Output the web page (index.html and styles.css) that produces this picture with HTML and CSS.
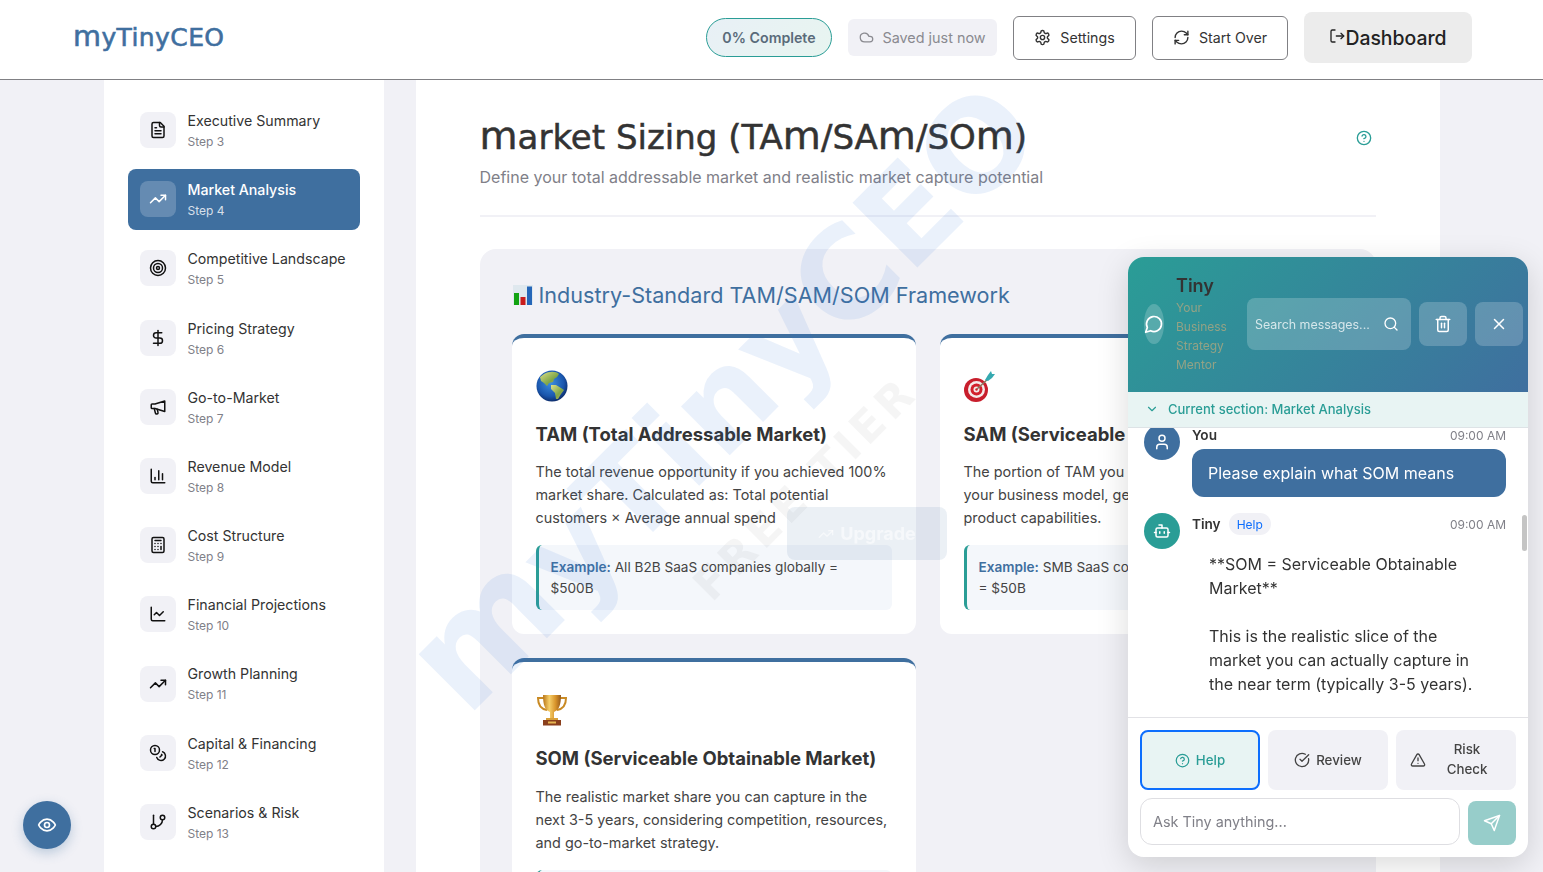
FILE: index.html
```html
<!DOCTYPE html>
<html lang="en">
<head>
  <meta charset="UTF-8">
  <title>MyTinyCEO - Market Sizing</title>
  <link rel="stylesheet" href="styles.css">
</head>
<body>
  <!-- icon sprite -->
  <svg class="sprite" xmlns="http://www.w3.org/2000/svg">
    <defs>
      <radialGradient id="g-sea" cx="0.45" cy="0.4" r="0.62"><stop offset="0" stop-color="#3d8fe0"/><stop offset="0.7" stop-color="#1a56ad"/><stop offset="1" stop-color="#0c2a66"/></radialGradient>
      <linearGradient id="g-land" x1="0" y1="0" x2="1" y2="1"><stop offset="0" stop-color="#dfe08a"/><stop offset="0.6" stop-color="#7fa648"/><stop offset="1" stop-color="#c3a94e"/></linearGradient>
      <linearGradient id="g-gold" x1="0" y1="0" x2="1" y2="0"><stop offset="0" stop-color="#b9761a"/><stop offset="0.35" stop-color="#f6cf6a"/><stop offset="0.7" stop-color="#d8932a"/><stop offset="1" stop-color="#96591a"/></linearGradient>
    </defs>
    <symbol id="i-file" viewBox="0 0 24 24"><path d="M15 2H6a2 2 0 0 0-2 2v16a2 2 0 0 0 2 2h12a2 2 0 0 0 2-2V7Z"/><path d="M14 2v4a2 2 0 0 0 2 2h4"/><path d="M10 9H8"/><path d="M16 13H8"/><path d="M16 17H8"/></symbol>
    <symbol id="i-trend" viewBox="0 0 24 24"><path d="M22 7l-8.500 8.500-5-5L2 17"/><path d="M16 7h6v6"/></symbol>
    <symbol id="i-target" viewBox="0 0 24 24"><circle cx="12" cy="12" r="10"/><circle cx="12" cy="12" r="6"/><circle cx="12" cy="12" r="2"/></symbol>
    <symbol id="i-dollar" viewBox="0 0 24 24"><path d="M12 2v20"/><path d="M17 5H9.500a3.500 3.500 0 0 0 0 7h5a3.500 3.500 0 0 1 0 7H6"/></symbol>
    <symbol id="i-mega" viewBox="0 0 24 24"><path d="M21 4v14l-13-4H4a1 1 0 0 1-1-1V9a1 1 0 0 1 1-1h4z"/><path d="M7 14l1.500 6a1.800 1.800 0 0 0 3.500-.9L11 15"/></symbol>
    <symbol id="i-bars" viewBox="0 0 24 24"><path d="M3 3v16a2 2 0 0 0 2 2h16"/><path d="M18 17V9"/><path d="M13 17V5"/><path d="M8 17v-3"/></symbol>
    <symbol id="i-calc" viewBox="0 0 24 24"><rect x="4" y="2" width="16" height="20" rx="2"/><path d="M8 6h8"/><path d="M16 14v4"/><path d="M16 10h.01M12 10h.01M8 10h.01M12 14h.01M8 14h.01M12 18h.01M8 18h.01"/></symbol>
    <symbol id="i-line" viewBox="0 0 24 24"><path d="M3 3v16a2 2 0 0 0 2 2h16"/><path d="m19 9-5 5-4-4-3 3"/></symbol>
    <symbol id="i-coins" viewBox="0 0 24 24"><circle cx="8" cy="8" r="6"/><path d="M18.090 10.370A6 6 0 1 1 10.340 18"/><path d="M7 6h1v4"/><path d="m16.710 13.880.7.710-2.820 2.820"/></symbol>
    <symbol id="i-branch" viewBox="0 0 24 24"><path d="M6 3v12"/><circle cx="18" cy="6" r="3"/><circle cx="6" cy="18" r="3"/><path d="M18 9a9 9 0 0 1-9 9"/></symbol>
    <symbol id="i-chat" viewBox="0 0 24 24"><path d="M7.900 20A9 9 0 1 0 4 16.100L2 22Z"/></symbol>
    <symbol id="i-search" viewBox="0 0 24 24"><circle cx="11" cy="11" r="8"/><path d="m21 21-4.300-4.300"/></symbol>
    <symbol id="i-trash" viewBox="0 0 24 24"><path d="M3 6h18"/><path d="M19 6v14c0 1-1 2-2 2H7c-1 0-2-1-2-2V6"/><path d="M8 6V4c0-1 1-2 2-2h4c1 0 2 1 2 2v2"/><path d="M10 11v6"/><path d="M14 11v6"/></symbol>
    <symbol id="i-x" viewBox="0 0 24 24"><path d="M18 6 6 18"/><path d="m6 6 12 12"/></symbol>
    <symbol id="i-chevron" viewBox="0 0 24 24"><path d="m6 9 6 6 6-6"/></symbol>
    <symbol id="i-user" viewBox="0 0 24 24"><path d="M19 21v-2a4 4 0 0 0-4-4H9a4 4 0 0 0-4 4v2"/><circle cx="12" cy="7" r="4"/></symbol>
    <symbol id="i-bot" viewBox="0 0 24 24"><path d="M12 8V4H8"/><rect x="4" y="8" width="16" height="12" rx="2"/><path d="M2 14h2"/><path d="M20 14h2"/><path d="M15 13v2"/><path d="M9 13v2"/></symbol>
    <symbol id="i-help" viewBox="0 0 24 24"><circle cx="12" cy="12" r="10"/><path d="M9.090 9a3 3 0 0 1 5.830 1c0 2-3 3-3 3"/><path d="M12 17h.01"/></symbol>
    <symbol id="i-check" viewBox="0 0 24 24"><path d="M21.800 10A10 10 0 1 1 17 3.340"/><path d="m9 11 3 3L22 4"/></symbol>
    <symbol id="i-alert" viewBox="0 0 24 24"><path d="m21.730 18-8-14a2 2 0 0 0-3.480 0l-8 14A2 2 0 0 0 4 21h16a2 2 0 0 0 1.730-3"/><path d="M12 9v4"/><path d="M12 17h.01"/></symbol>
    <symbol id="i-send" viewBox="0 0 24 24"><path d="m22 2-7 20-4-9-9-4Z"/><path d="M22 2 11 13"/></symbol>
    <symbol id="i-eye" viewBox="0 0 24 24"><path d="M2 12s3-7 10-7 10 7 10 7-3 7-10 7-10-7-10-7Z"/><circle cx="12" cy="12" r="3"/></symbol>
    <symbol id="i-cloud" viewBox="0 0 24 24"><path d="M17.500 19H9a7 7 0 1 1 6.710-9h1.790a4.500 4.500 0 1 1 0 9Z"/></symbol>
    <symbol id="i-gear" viewBox="0 0 24 24"><path d="M12.220 2h-.44a2 2 0 0 0-2 2v.18a2 2 0 0 1-1 1.730l-.43.250a2 2 0 0 1-2 0l-.15-.08a2 2 0 0 0-2.730.730l-.22.380a2 2 0 0 0 .73 2.730l.15.100a2 2 0 0 1 1 1.720v.510a2 2 0 0 1-1 1.740l-.15.090a2 2 0 0 0-.73 2.730l.22.380a2 2 0 0 0 2.730.730l.15-.08a2 2 0 0 1 2 0l.43.250a2 2 0 0 1 1 1.730V20a2 2 0 0 0 2 2h.44a2 2 0 0 0 2-2v-.18a2 2 0 0 1 1-1.730l.43-.25a2 2 0 0 1 2 0l.15.08a2 2 0 0 0 2.730-.73l.22-.39a2 2 0 0 0-.73-2.730l-.15-.08a2 2 0 0 1-1-1.740v-.5a2 2 0 0 1 1-1.740l.15-.09a2 2 0 0 0 .73-2.730l-.22-.38a2 2 0 0 0-2.730-.73l-.15.08a2 2 0 0 1-2 0l-.43-.25a2 2 0 0 1-1-1.730V4a2 2 0 0 0-2-2z"/><circle cx="12" cy="12" r="3"/></symbol>
    <symbol id="i-refresh" viewBox="0 0 24 24"><path d="M3 12a9 9 0 0 1 9-9 9.750 9.750 0 0 1 6.740 2.740L21 8"/><path d="M21 3v5h-5"/><path d="M21 12a9 9 0 0 1-9 9 9.750 9.750 0 0 1-6.740-2.740L3 16"/><path d="M8 16H3v5"/></symbol>
    <symbol id="i-exit" viewBox="0 0 24 24"><path d="M9 21H5a2 2 0 0 1-2-2V5a2 2 0 0 1 2-2h4"/><path d="M11 12h11"/><path d="m18 8 4 4-4 4"/></symbol>
  </svg>

  <header class="topbar">
    <div class="logo"><span class="m">M</span>yTinyCEO</div>
    <div class="top-actions">
      <div class="progress-pill">0% Complete</div>
      <div class="saved"><svg class="icon icon-15"><use href="#i-cloud"/></svg>Saved just now</div>
      <button class="btn-outline btn-settings"><svg class="icon btn-icon"><use href="#i-gear"/></svg>Settings</button>
      <button class="btn-outline btn-restart"><svg class="icon btn-icon"><use href="#i-refresh"/></svg>Start Over</button>
      <button class="btn-dash"><svg class="icon icon-16 dash-icon"><use href="#i-exit"/></svg>Dashboard</button>
    </div>
  </header>

  <div class="layout">
    <!-- Steps -->
    <nav class="sidebar">
      <a class="step"><span class="step-icon"><svg class="icon"><use href="#i-file"/></svg></span><span class="step-text"><b>Executive Summary</b><small>Step 3</small></span></a>
      <a class="step active"><span class="step-icon"><svg class="icon"><use href="#i-trend"/></svg></span><span class="step-text"><b>Market Analysis</b><small>Step 4</small></span></a>
      <a class="step"><span class="step-icon"><svg class="icon"><use href="#i-target"/></svg></span><span class="step-text"><b>Competitive Landscape</b><small>Step 5</small></span></a>
      <a class="step"><span class="step-icon"><svg class="icon"><use href="#i-dollar"/></svg></span><span class="step-text"><b>Pricing Strategy</b><small>Step 6</small></span></a>
      <a class="step"><span class="step-icon"><svg class="icon"><use href="#i-mega"/></svg></span><span class="step-text"><b>Go-to-Market</b><small>Step 7</small></span></a>
      <a class="step"><span class="step-icon"><svg class="icon"><use href="#i-bars"/></svg></span><span class="step-text"><b>Revenue Model</b><small>Step 8</small></span></a>
      <a class="step"><span class="step-icon"><svg class="icon"><use href="#i-calc"/></svg></span><span class="step-text"><b>Cost Structure</b><small>Step 9</small></span></a>
      <a class="step"><span class="step-icon"><svg class="icon"><use href="#i-line"/></svg></span><span class="step-text"><b>Financial Projections</b><small>Step 10</small></span></a>
      <a class="step"><span class="step-icon"><svg class="icon"><use href="#i-trend"/></svg></span><span class="step-text"><b>Growth Planning</b><small>Step 11</small></span></a>
      <a class="step"><span class="step-icon"><svg class="icon"><use href="#i-coins"/></svg></span><span class="step-text"><b>Capital &amp; Financing</b><small>Step 12</small></span></a>
      <a class="step"><span class="step-icon"><svg class="icon"><use href="#i-branch"/></svg></span><span class="step-text"><b>Scenarios &amp; Risk</b><small>Step 13</small></span></a>
    </nav>

    <!-- Main content -->
    <main class="content">
      <div class="page-head">
        <h1><span class="m">M</span>arket Sizing (TA<span class="m">M</span>/SA<span class="m">M</span>/SO<span class="m">M</span>)</h1>
        <svg class="icon icon-16 head-help"><use href="#i-help"/></svg>
      </div>
      <p class="page-sub">Define your total addressable market and realistic market capture potential</p>
      <hr class="rule">

      <section class="framework">
        <h2>
          <svg class="emoji-chart" viewBox="0 0 20 20"><rect width="20" height="20" fill="#dfe8ee"/><rect x="1" y="8" width="5" height="12" fill="#12a312"/><rect x="7.500" y="12" width="5" height="8" fill="#c91c1c"/><rect x="14" y="1.500" width="5" height="18.500" fill="#2566b8"/></svg>
          Industry-Standard TAM/SAM/SOM Framework
        </h2>
        <div class="cards">
          <article class="card">
            <svg class="emoji" viewBox="0 0 32 32"><circle cx="16" cy="16" r="15.500" fill="url(#g-sea)"/><path d="M8 4c5-3 12-3 15 0l-2 3-3 2-1 3-4 1-2 3-3-3-3-2-1-4z" fill="url(#g-land)"/><path d="M15 15l5 0 5 3 3 2-3 4-3 5-2 0-1-6-4-4z" fill="url(#g-land)"/></svg>
            <h3>TAM (Total Addressable Market)</h3>
            <p>The total revenue opportunity if you achieved 100% market share. Calculated as: Total potential customers × Average annual spend</p>
            <div class="example"><strong>Example:</strong> All B2B SaaS companies globally = $500B</div>
          </article>
          <article class="card">
            <svg class="emoji" viewBox="0 0 32 32"><circle cx="12" cy="20" r="12" fill="#c81e2c"/><circle cx="12.500" cy="19.500" r="8.500" fill="#f5eaea"/><circle cx="12.500" cy="19.500" r="6" fill="#d3202c"/><circle cx="12.500" cy="19.500" r="3" fill="#f5eaea"/><circle cx="12.500" cy="19.500" r="1.200" fill="#d3202c"/><path d="M13 19 25 8" stroke="#8a7a60" stroke-width="1.500"/><path d="M21 10l3-5 3-4 1 3 3 0-3 4-4 3z" fill="#35a9b0"/></svg>
            <h3>SAM (Serviceable Addressable Market)</h3>
            <p>The portion of TAM you can realistically serve with your business model, geographic reach, and product capabilities.</p>
            <div class="example"><strong>Example:</strong> SMB SaaS companies in North America = $50B</div>
          </article>
          <article class="card">
            <svg class="emoji" viewBox="0 0 32 32"><path d="M8 4H2c0 7 3 11 9 12M24 4h6c0 7-3 11-9 12" fill="none" stroke="#c98a24" stroke-width="2"/><path d="M7 1h18c0 10-2 15-7 17v6h-4v-6C9 16 7 11 7 1z" fill="url(#g-gold)"/><rect x="10" y="24" width="12" height="2" fill="#d8a03a"/><rect x="7" y="26" width="18" height="5.500" fill="#8a3f1c"/><rect x="12" y="27.500" width="8" height="2" fill="#e6b651"/></svg>
            <h3>SOM (Serviceable Obtainable Market)</h3>
            <p class="som-text">The realistic market share you can capture in the next 3-5 years, considering competition, resources, and go-to-market strategy.</p>
            <div class="example example-empty"></div>
          </article>
        </div>
      </section>
    </main>
  </div>

  <!-- watermark over the content -->
  <div class="watermark">
    <span class="wm-logo"><span class="m">M</span>yTinyCEO</span>
    <span class="wm-tier">FREE TIER</span>
    <span class="wm-upgrade"><svg class="icon icon-16"><use href="#i-trend"/></svg>Upgrade</span>
  </div>

  <button class="fab"><svg class="icon icon-20"><use href="#i-eye"/></svg></button>

  <!-- Chat -->
  <aside class="chat">
    <div class="chat-head">
      <span class="chat-badge"><svg class="icon icon-20"><use href="#i-chat"/></svg></span>
      <div class="chat-title">
        <h4>Tiny</h4>
        <span>Your Business Strategy Mentor</span>
      </div>
      <div class="chat-search"><span>Search messages...</span><svg class="icon icon-16"><use href="#i-search"/></svg></div>
      <button class="chat-tool"><svg class="icon icon-18"><use href="#i-trash"/></svg></button>
      <button class="chat-tool"><svg class="icon icon-18"><use href="#i-x"/></svg></button>
    </div>
    <div class="chat-section"><svg class="icon icon-14"><use href="#i-chevron"/></svg>Current section: Market Analysis</div>
    <div class="chat-messages">
      <div class="msg msg-user">
        <span class="avatar avatar-user"><svg class="icon icon-18"><use href="#i-user"/></svg></span>
        <div class="msg-body">
          <div class="msg-meta"><b>You</b><time>09:00 AM</time></div>
          <div class="bubble">Please explain what SOM means</div>
        </div>
      </div>
      <div class="msg">
        <span class="avatar avatar-bot"><svg class="icon icon-18"><use href="#i-bot"/></svg></span>
        <div class="msg-body">
          <div class="msg-meta"><b>Tiny</b><em>Help</em><time>09:00 AM</time></div>
          <div class="reply">**SOM = Serviceable Obtainable Market**<br><br>This is the realistic slice of the market you can actually capture in the near term (typically 3-5 years).</div>
        </div>
      </div>
      <span class="scroll-thumb"></span>
    </div>
    <div class="chat-foot">
      <div class="quick">
        <button class="quick-btn selected"><svg class="icon icon-15"><use href="#i-help"/></svg>Help</button>
        <button class="quick-btn"><svg class="icon icon-16"><use href="#i-check"/></svg>Review</button>
        <button class="quick-btn quick-risk"><svg class="icon icon-16"><use href="#i-alert"/></svg><span>Risk Check</span></button>
      </div>
      <div class="ask">
        <div class="ask-input">Ask Tiny anything...</div>
        <button class="ask-send"><svg class="icon icon-18"><use href="#i-send"/></svg></button>
      </div>
    </div>
  </aside>
</body>
</html>
```

FILE: styles.css
```css
* {
  box-sizing: border-box;
}

html, body {
  height: 100%;
  overflow: hidden;
}

body {
  margin: 0;
  font-family: 'Inter', sans-serif;
  background-color: #f1f1f6;
  color: #333;
}

button {
  font-family: inherit;
  cursor: pointer;
}

.sprite {
  position: absolute;
  width: 0;
  height: 0;
}

.icon {
  fill: none;
  stroke: currentColor;
  stroke-width: 2;
  stroke-linecap: round;
  stroke-linejoin: round;
  flex: none;
}

.icon-14 { width: 14px; height: 14px; }
.icon-15 { width: 15px; height: 15px; }
.icon-16 { width: 16px; height: 16px; }
.icon-18 { width: 18px; height: 18px; }
.icon-20 { width: 20px; height: 20px; }

.m {
  text-transform: lowercase;
  font-size: 1.15em;
}

/* Top bar */
.topbar {
  height: 80px;
  background: #fff;
  border-bottom: 1px solid #808084;
  display: flex;
  align-items: center;
  justify-content: space-between;
  padding: 0 71px 4px 73px;
}

.logo {
  font-family: 'DejaVu Sans', sans-serif;
  font-size: 25px;
  font-weight: 400;
  color: #3f6f9f;
  -webkit-text-stroke: 0.6px #3f6f9f;
  letter-spacing: 0.4px;
  margin-bottom: 4px;
}

.top-actions {
  display: flex;
  align-items: center;
  gap: 16px;
}

.progress-pill {
  width: 126px;
  height: 39px;
  display: flex;
  align-items: center;
  justify-content: center;
  border: 1px solid #2a9d96;
  border-radius: 20px;
  background: linear-gradient(135deg, #e8f0f6, #e8f5f0);
  color: #5a6b7a;
  font-size: 14.2px;
  font-weight: 600;
}

.saved {
  width: 149px;
  height: 37px;
  display: flex;
  align-items: center;
  justify-content: center;
  gap: 8px;
  background: #f1f1f6;
  border-radius: 6px;
  color: #8a8a90;
  font-size: 14.4px;
}

.btn-outline {
  height: 44px;
  display: flex;
  align-items: center;
  justify-content: center;
  gap: 9px;
  background: #fff;
  border: 1px solid #808084;
  border-radius: 6px;
  color: #333;
  font-size: 14.2px;
  font-weight: 400;
}

.btn-icon {
  width: 17px;
  height: 17px;
}

.btn-settings { width: 123px; }
.btn-restart { width: 136px; }

.btn-dash {
  width: 168px;
  height: 51px;
  display: flex;
  align-items: center;
  justify-content: center;
  background: #ececec;
  border: none;
  border-radius: 8px;
  color: #222;
  font-size: 19.4px;
  font-weight: 500;
}

.dash-icon {
  margin-top: -4px;
}

/* Page layout */
.layout {
  width: 1336px;
  margin: 0 auto;
  display: flex;
  gap: 32px;
  height: calc(100% - 80px);
}

.sidebar {
  width: 280px;
  flex: none;
  background: #fff;
  padding: 19.5px 24px;
  display: flex;
  flex-direction: column;
  gap: 8px;
}

.step {
  display: flex;
  align-items: center;
  gap: 12px;
  height: 61.2px;
  flex: none;
  padding: 0 12px;
  border-radius: 8px;
  color: #333;
}

.step-icon {
  width: 36px;
  height: 36px;
  flex: none;
  display: flex;
  align-items: center;
  justify-content: center;
  background: #f1f1f6;
  border-radius: 8px;
  color: #111;
}

.step-icon .icon {
  width: 18px;
  height: 18px;
}

.step-text {
  display: flex;
  flex-direction: column;
  white-space: nowrap;
}

.step-text b {
  font-size: 14.2px;
  font-weight: 400;
  line-height: 23px;
}

.step-text small {
  font-size: 12px;
  line-height: 19.2px;
  color: #808088;
}

.step.active {
  background: #3f6f9f;
  color: #fff;
}

.step.active .step-icon {
  background: rgba(255, 255, 255, 0.2);
  color: #fff;
}

.step.active b {
  font-weight: 500;
}

.step.active small {
  color: rgba(255, 255, 255, 0.8);
}

.content {
  width: 1024px;
  background: #fff;
  padding: 32px 64px 0;
  overflow: hidden;
}

.page-head {
  display: flex;
  align-items: center;
  justify-content: space-between;
  height: 50px;
  padding-right: 4px;
}

h1 {
  margin: 0 0 4px;
  font-family: 'DejaVu Sans', sans-serif;
  font-size: 34px;
  font-weight: 400;
  color: #333;
  -webkit-text-stroke: 0.5px #333;
  white-space: nowrap;
}

.head-help {
  color: #2a9d96;
  margin-top: 2px;
}

.page-sub {
  margin: 3px 0 0;
  font-size: 16px;
  line-height: 24px;
  color: #808088;
}

.rule {
  margin: 26px 0 32px;
  border: none;
  height: 2px;
  background: #f1f1f6;
}

.framework {
  background: #f1f1f6;
  border-radius: 16px;
  padding: 31px 32px 32px;
}

.framework h2 {
  margin: 0 0 25px 1px;
  display: flex;
  align-items: center;
  gap: 6px;
  height: 29px;
  font-family: 'Inter', sans-serif;
  font-size: 21.6px;
  font-weight: 400;
  color: #3f6f9f;
}

.emoji-chart {
  width: 20px;
  height: 20px;
}

.cards {
  display: grid;
  grid-template-columns: 404px 404px;
  column-gap: 24px;
  row-gap: 24px;
}

.card {
  background: #fff;
  border-top: 4px solid #3f6f9f;
  border-radius: 12px;
  padding: 32px 24px 24px;
  height: 300px;
}

.card:last-child {
  height: auto;
}

.emoji {
  display: block;
  width: 32px;
  height: 32px;
}

.card h3 {
  margin: 18px 0 0;
  font-family: 'Inter', sans-serif;
  font-size: 18.5px;
  font-weight: 700;
  line-height: 29px;
  color: #333;
}

.card p {
  margin: 11px 0 16px;
  font-size: 14.4px;
  line-height: 23px;
  color: #444;
}

.card p.som-text {
  margin-top: 12px;
}

.example {
  background: #f4f7fb;
  border-left: 3px solid #2a9d96;
  border-radius: 6px;
  padding: 12px 12px 11px;
  font-size: 13.6px;
  line-height: 21px;
  color: #444;
}

.example strong {
  color: #3f6f9f;
  font-weight: 600;
}

.example-empty {
  height: 65px;
}

/* Watermark */
.watermark {
  position: fixed;
  inset: 0;
  overflow: hidden;
  pointer-events: none;
}

.wm-logo {
  position: absolute;
  left: 721px;
  top: 394px;
  transform: translate(-50%, -50%) rotate(-45deg);
  font-family: 'DejaVu Sans', sans-serif;
  font-size: 126px;
  font-weight: 700;
  line-height: 1;
  white-space: nowrap;
  color: rgba(50, 120, 220, 0.1);
}

.wm-tier {
  position: absolute;
  left: 805px;
  top: 488px;
  transform: translate(-50%, -50%) rotate(-45deg);
  font-family: 'DejaVu Sans', sans-serif;
  font-size: 44px;
  font-weight: 700;
  letter-spacing: 5px;
  white-space: nowrap;
  color: rgba(0, 0, 0, 0.04);
}

.wm-upgrade {
  position: absolute;
  left: 787px;
  top: 507px;
  width: 160px;
  height: 53px;
  display: flex;
  align-items: center;
  justify-content: center;
  gap: 6px;
  background: rgba(63, 111, 160, 0.1);
  border-radius: 8px;
  color: rgba(255, 255, 255, 0.55);
  font-size: 18px;
  font-weight: 700;
}

.fab {
  position: fixed;
  left: 23px;
  bottom: 23px;
  width: 48px;
  height: 48px;
  display: flex;
  align-items: center;
  justify-content: center;
  background: #3f6f9f;
  border: none;
  border-radius: 50%;
  color: #fff;
  box-shadow: 0 4px 12px rgba(63, 111, 159, 0.3);
}

/* Chat panel */
.chat {
  position: fixed;
  right: 15px;
  bottom: 15px;
  width: 400px;
  height: 600px;
  display: flex;
  flex-direction: column;
  background: #fff;
  border-radius: 16px;
  overflow: hidden;
  box-shadow: 0 8px 32px rgba(0, 0, 0, 0.15);
}

.chat-head {
  height: 135px;
  flex: none;
  display: flex;
  align-items: center;
  gap: 8px;
  padding: 0 0 1px 16px;
  background: linear-gradient(135deg, #2a9d96, #3f6f9f);
  color: #fff;
}

.chat-badge {
  width: 20px;
  height: 40px;
  flex: none;
  display: flex;
  align-items: center;
  justify-content: center;
  background: rgba(255, 255, 255, 0.2);
  border-radius: 50%;
}

.chat-title {
  width: 63px;
  margin: 0 0 0 4px;
  padding-bottom: 3px;
  flex: none;
}

.chat-title h4 {
  margin: 0 0 -3px;
  font-size: 18px;
  font-weight: 600;
  line-height: 30px;
  color: #333;
}

.chat-title span {
  display: block;
  font-size: 12px;
  line-height: 19.2px;
  color: #93a285;
}

.chat-search {
  width: 164px;
  height: 52px;
  flex: none;
  display: flex;
  align-items: center;
  justify-content: space-between;
  padding: 0 12px 0 8px;
  background: rgba(255, 255, 255, 0.2);
  border-radius: 8px;
  font-size: 12.4px;
  color: rgba(255, 255, 255, 0.75);
}

.chat-search .icon {
  color: #fff;
}

.chat-tool {
  width: 48px;
  height: 44px;
  flex: none;
  display: flex;
  align-items: center;
  justify-content: center;
  background: rgba(255, 255, 255, 0.2);
  border: none;
  border-radius: 8px;
  color: #fff;
}

.chat-section {
  height: 36px;
  flex: none;
  display: flex;
  align-items: center;
  gap: 9px;
  padding: 0 0 1px 17px;
  background: #e8f4f3;
  border-bottom: 1px solid #dde3e6;
  color: #2a9d96;
  font-size: 13px;
  font-weight: 500;
}

.chat-messages {
  position: relative;
  flex: 1;
  min-height: 0;
  overflow: hidden;
  padding: 0 22px 0 16px;
}

.msg {
  display: flex;
  gap: 12px;
  margin-bottom: 16px;
}

.msg-user {
  margin-top: -4px;
}

.avatar {
  width: 36px;
  height: 36px;
  flex: none;
  display: flex;
  align-items: center;
  justify-content: center;
  border-radius: 50%;
  color: #fff;
}

.avatar-user { background: #3f6f9f; }
.avatar-bot { background: #2a9d96; }

.msg-body {
  flex: 1;
  min-width: 0;
}

.msg-meta {
  display: flex;
  align-items: center;
  gap: 8px;
  height: 22px;
  font-size: 12px;
}

.msg-meta b {
  font-size: 13.6px;
  font-weight: 600;
  color: #333;
}

.msg-meta em {
  font-style: normal;
  color: #0d6efd;
  background: #f1f1f6;
  border-radius: 11px;
  height: 22px;
  padding: 0 8px;
  display: flex;
  align-items: center;
}

.msg-meta time {
  margin-left: auto;
  color: #808088;
}

.bubble {
  margin-top: 3px;
  height: 48px;
  display: flex;
  align-items: center;
  padding: 0 16px;
  background: #3f6f9f;
  border-radius: 12px;
  color: #fff;
  font-size: 16px;
}

.reply {
  padding: 17px 16px 0 17px;
  font-size: 16px;
  line-height: 24px;
  color: #333;
}

.scroll-thumb {
  position: absolute;
  right: 1px;
  top: 87px;
  width: 5px;
  height: 36px;
  border-radius: 3px;
  background: #c4c4c4;
}

.chat-foot {
  flex: none;
  height: 140px;
  border-top: 1px solid #e2e2e6;
  padding: 12px;
}

.quick {
  display: flex;
  gap: 8px;
}

.quick-btn {
  width: 120px;
  height: 60px;
  display: flex;
  align-items: center;
  justify-content: center;
  gap: 6px;
  background: #f1f1f6;
  border: none;
  border-radius: 8px;
  color: #444;
  font-size: 13.3px;
  font-weight: 500;
}

.quick-btn.selected {
  background: #e8f4f3;
  border: 2px solid #0d6efd;
  color: #2a9d96;
}

.quick-risk {
  gap: 0;
  padding: 0 17px 0 14px;
  justify-content: space-between;
}

.quick-risk span {
  width: 64px;
  text-align: center;
  line-height: 20px;
  margin-top: -2px;
}

.ask {
  margin-top: 8px;
  display: flex;
  align-items: flex-start;
  gap: 8px;
}

.ask-input {
  width: 320px;
  height: 47px;
  display: flex;
  align-items: center;
  padding: 0 12px;
  border: 1px solid #dedee2;
  border-radius: 12px;
  color: #808088;
  font-size: 14.4px;
}

.ask-send {
  width: 48px;
  height: 44px;
  margin-top: 3px;
  display: flex;
  align-items: center;
  justify-content: center;
  background: #97cdca;
  border: none;
  border-radius: 8px;
  color: #fff;
}
```
